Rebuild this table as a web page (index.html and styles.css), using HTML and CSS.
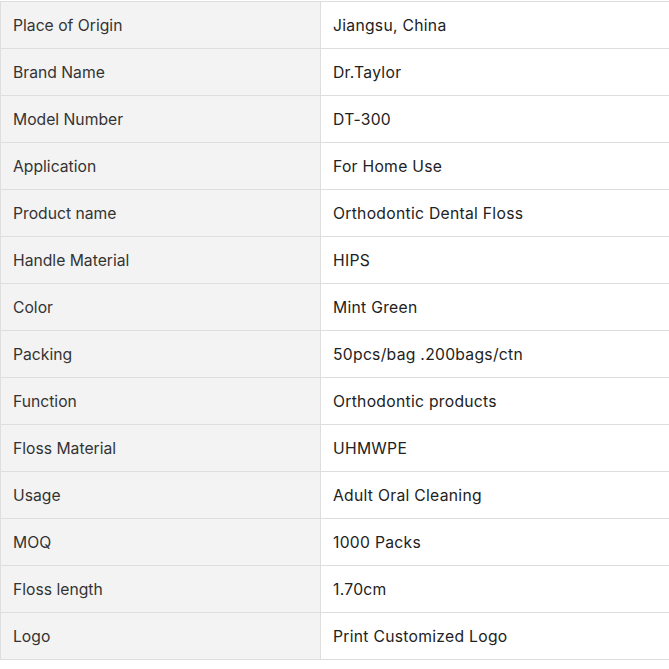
FILE: index.html
```html
<!DOCTYPE html>
<html>
<head>
<meta charset="utf-8">
<link rel="stylesheet" href="styles.css">
</head>
<body>
<table class="spec">
<tbody>
<tr><td class="k">Place of Origin</td><td class="v">Jiangsu, China</td></tr>
<tr><td class="k">Brand Name</td><td class="v">Dr.Taylor</td></tr>
<tr><td class="k">Model Number</td><td class="v">DT-300</td></tr>
<tr><td class="k">Application</td><td class="v">For Home Use</td></tr>
<tr><td class="k">Product name</td><td class="v">Orthodontic Dental Floss</td></tr>
<tr><td class="k">Handle Material</td><td class="v">HIPS</td></tr>
<tr><td class="k">Color</td><td class="v">Mint Green</td></tr>
<tr><td class="k">Packing</td><td class="v">50pcs/bag .200bags/ctn</td></tr>
<tr><td class="k">Function</td><td class="v">Orthodontic products</td></tr>
<tr><td class="k">Floss Material</td><td class="v">UHMWPE</td></tr>
<tr><td class="k">Usage</td><td class="v">Adult Oral Cleaning</td></tr>
<tr><td class="k">MOQ</td><td class="v">1000 Packs</td></tr>
<tr><td class="k">Floss length</td><td class="v">1.70cm</td></tr>
<tr><td class="k">Logo</td><td class="v">Print Customized Logo</td></tr>
</tbody>
</table>
</body>
</html>
```
FILE: styles.css
```css
html, body {
  margin: 0;
  padding: 0;
  background: #fff;
  overflow: hidden;
}
.spec {
  border-collapse: collapse;
  width: 690px;
  margin-top: 1px;
  font-family: Inter, "Liberation Sans", sans-serif;
  font-size: 15.7px;
  color: #333;
}
.spec td {
  border: 1px solid #dedede;
  height: 47px;
  padding: 0 12px;
  box-sizing: border-box;
  vertical-align: middle;
}
.spec td.k {
  width: 320px;
  background: #f3f3f3;
}
.spec td.v {
  background: #fff;
  color: #222;
  letter-spacing: 0.28px;
}
```
